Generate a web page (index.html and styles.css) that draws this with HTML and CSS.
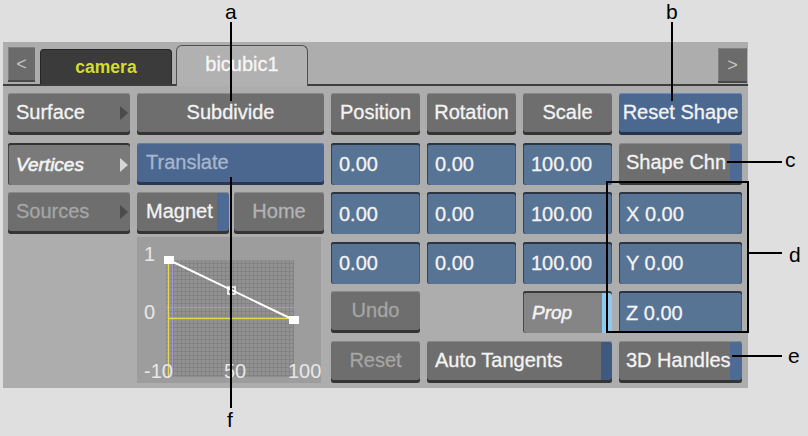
FILE: index.html
```html
<!DOCTYPE html>
<html>
<head>
<meta charset="utf-8">
<link rel="stylesheet" href="styles.css">
</head>
<body>
<div class="panel">
  <div class="tabbar">
    <div class="nav">&lt;</div>
    <div class="tab tab-camera">camera</div>
    <div class="tab tab-active">bicubic1</div>
    <div class="tab-fill"></div>
    <div class="nav nav-r">&gt;</div>
  </div>
  <div class="grid">
    <div class="c g menu">Surface<span class="tri"></span></div>
    <div class="c g center">Subdivide</div>
    <div class="c g center">Position</div>
    <div class="c g center">Rotation</div>
    <div class="c g center">Scale</div>
    <div class="c bb center">Reset Shape</div>

    <div class="c menu vert">Vertices<span class="tri tri-light"></span></div>
    <div class="c trans">Translate</div>
    <div class="c f">0.00</div>
    <div class="c f">0.00</div>
    <div class="c f">100.00</div>
    <div class="c g strip rpad">Shape Chn</div>

    <div class="c g menu dis">Sources<span class="tri"></span></div>
    <div class="pair">
      <div class="c g strip magnet">Magnet</div>
      <div class="c g center home">Home</div>
    </div>
    <div class="c f">0.00</div>
    <div class="c f">0.00</div>
    <div class="c f">100.00</div>
    <div class="c f rpad">X 0.00</div>

    <div class="graph">
      <svg width="184" height="146" viewBox="0 0 184 146">
        <defs>
          <pattern id="grid" x="29" y="23" width="4" height="4" patternUnits="userSpaceOnUse">
            <path d="M3.5 0V4M0 3.5H4" fill="none" stroke="#838383" stroke-width="1"/>
          </pattern>
        </defs>
        <rect x="29" y="23" width="128" height="117" fill="#929292"/>
        <rect x="29" y="23" width="128" height="117" fill="url(#grid)"/>
        <line x1="29" y1="70.5" x2="157" y2="70.5" stroke="#9d97c4" stroke-width="1"/>
        <line x1="35.5" y1="23" x2="35.5" y2="140" stroke="#9d97c4" stroke-width="1"/>
        <line x1="31.5" y1="24" x2="31.5" y2="140" stroke="#e8da4c" stroke-width="1.5"/>
        <line x1="31" y1="81.5" x2="157" y2="81.5" stroke="#e8da4c" stroke-width="1.5"/>
        <line x1="32" y1="23" x2="157" y2="83" stroke="#ffffff" stroke-width="2"/>
        <rect x="27" y="19" width="10" height="8" fill="#ffffff"/>
        <rect x="152" y="79" width="10" height="8" fill="#ffffff"/>
        <rect x="91" y="50" width="7" height="7" fill="none" stroke="#ffffff" stroke-width="1.5"/>
        <text class="gl" x="7" y="24">1</text>
        <text class="gl" x="7" y="82">0</text>
        <text class="gl" x="7" y="141">-10</text>
        <text class="gl" x="87" y="141">50</text>
        <text class="gl" x="151" y="141">100</text>
      </svg>
    </div>
    <div class="c f r4 c3">0.00</div>
    <div class="c f r4 c4">0.00</div>
    <div class="c f r4 c5">100.00</div>
    <div class="c f rpad r4 c6">Y 0.00</div>

    <div class="c g center dis r5 c3">Undo</div>
    <div class="c prop r5 c5">Prop</div>
    <div class="c f rpad r5 c6">Z 0.00</div>

    <div class="c g center dis r6 c3">Reset</div>
    <div class="c g strip-dark auto r6">Auto Tangents</div>
    <div class="c g strip rpad r6 c6">3D Handles</div>
  </div>
</div>

<div class="annot">
  <span class="lbl lbl-a">a</span>
  <span class="lbl lbl-b">b</span>
  <span class="lbl lbl-c">c</span>
  <span class="lbl lbl-d">d</span>
  <span class="lbl lbl-e">e</span>
  <span class="lbl lbl-f">f</span>
  <div class="ln ln-a"></div>
  <div class="ln ln-b"></div>
  <div class="ln ln-c"></div>
  <div class="ln ln-d"></div>
  <div class="ln ln-e"></div>
  <div class="ln ln-f"></div>
  <div class="box-d"></div>
</div>
</body>
</html>
```

FILE: styles.css
```css
html, body {
  margin: 0;
  padding: 0;
}
body {
  width: 808px;
  height: 436px;
  background: #dfdfdf;
  font-family: "Liberation Sans", Arial, sans-serif;
  position: relative;
  overflow: hidden;
}

.panel {
  margin: 42px 0 0 3px;
  width: 745px;
  height: 346px;
  background: #adadad;
  box-sizing: border-box;
}

/* ---------- tab bar ---------- */
.tabbar {
  display: flex;
  align-items: flex-start;
  height: 42px;
  border-bottom: 2px solid #3e3e3e;
  padding-left: 5px;
}
.nav {
  margin-top: 5px;
  width: 27px;
  height: 35px;
  margin-right: 5px;
  background: #6b6b6b;
  box-shadow: inset 0 -2px 0 #4a4a4a, inset 1px 1px 0 #808080;
  color: #c4c4c4;
  font-size: 18px;
  display: flex;
  align-items: center;
  justify-content: center;
  box-sizing: border-box;
}
.nav-r {
  margin-top: 6px;
  width: 29px;
  margin-right: 1px;
}
.tab {
  box-sizing: border-box;
  width: 132px;
  display: flex;
  align-items: center;
  justify-content: center;
}
.tab-camera {
  margin-top: 7px;
  height: 35px;
  margin-right: 4px;
  background: #3b3b3b;
  border: 1px solid #262626;
  border-bottom: none;
  border-radius: 4px 4px 0 0;
  color: #d6dc2a;
  font-weight: bold;
  font-size: 17.5px;
}
.tab-active {
  margin-top: 3px;
  height: 41px;
  background: #b1b1b1;
  border: 1px solid #505050;
  border-bottom: none;
  border-radius: 6px 6px 0 0;
  color: #f6f6f6;
  font-size: 20px;
  padding-bottom: 3px;
  -webkit-text-stroke: 0.3px #f6f6f6;
}
.tab-fill {
  flex: 1;
}

/* ---------- control grid ---------- */
.grid {
  display: grid;
  grid-template-columns: 122px 187px 89px 89px 89px 123px;
  grid-template-rows: repeat(6, 42px);
  column-gap: 7px;
  row-gap: 7.6px;
  padding: 7px 5px 0;
}
.c {
  display: flex;
  align-items: center;
  box-sizing: border-box;
  padding: 0 8px 3px;
  font-size: 20px;
  color: #f3f3f3;
  -webkit-text-stroke: 0.3px currentColor;
  border-radius: 3px;
  white-space: nowrap;
  min-width: 0;
}
.center {
  justify-content: center;
  padding-left: 0;
  padding-right: 0;
}
.rpad {
  padding-left: 7px;
}

.r4 { grid-row: 4; }
.r5 { grid-row: 5; }
.r6 { grid-row: 6; }
.c3 { grid-column: 3; }
.c4 { grid-column: 4; }
.c5 { grid-column: 5; }
.c6 { grid-column: 6; }

/* raised gray button */
.g {
  background: #6e6e6e;
  box-shadow: inset 0 -3px 0 #353535, inset 0 1px 0 #8a8a8a;
}
/* raised blue button */
.bb {
  background: #4b6891;
  box-shadow: inset 0 -3px 0 #26344c, inset 0 1px 0 #6d8ab2;
}
/* blue numeric field (inset) */
.f {
  background: #587494;
  box-shadow: inset 0 2px 0 #2b3543, inset 1px 0 0 #364253, inset -1px 0 0 #465b76;
  padding-bottom: 0;
  padding-top: 2px;
}
.trans {
  background: #4b6790;
  box-shadow: inset 0 -3px 0 #2a3852, inset 0 1px 0 #6580a8;
  color: #a7b6cc;
  padding-left: 9px;
}

/* menus in the left column */
.menu {
  padding-right: 2px;
}
.tri {
  margin-left: auto;
  width: 0;
  height: 0;
  border-left: 8px solid #4b4b4b;
  border-top: 7px solid transparent;
  border-bottom: 7px solid transparent;
}
.tri-light {
  border-left-color: #d6d6d6;
}
.vert {
  background: #7a7a7a;
  box-shadow: inset 0 2px 0 #333333, inset 1px 0 0 #444444;
  font-style: italic;
  font-size: 19px;
  -webkit-text-stroke: 0.6px currentColor;
  padding-bottom: 0;
  padding-top: 2px;
}
.dis {
  color: #a5a5a5;
}

.pair {
  display: flex;
  gap: 5px;
}
.magnet {
  width: 92px;
  flex: none;
  padding-left: 9px;
}
.home {
  flex: 1;
  color: #b3b3b3;
}

.strip {
  background: linear-gradient(to left, #4d6b95 12px, #6e6e6e 12px);
}
.strip-dark {
  background: linear-gradient(to left, #3f5a80 11px, #6e6e6e 11px);
}

.graph {
  grid-column: 2;
  grid-row: 4 / 7;
  width: 184px;
  height: 146px;
  margin-top: -5px;
  background: #9d9d9d;
}
.graph svg {
  display: block;
}
.gl {
  font-family: "Liberation Sans", Arial, sans-serif;
  font-size: 20px;
  fill: #e8e8e8;
}

.prop {
  background: linear-gradient(to left, #8ccaf2 10px, #858585 10px);
  box-shadow: inset 0 2px 0 #3a3a3a, inset 1px 0 0 #4a4a4a;
  font-style: italic;
  font-size: 19px;
  -webkit-text-stroke: 0.5px currentColor;
  padding-left: 9px;
  padding-bottom: 0;
  padding-top: 2px;
}
.auto {
  grid-column: 4 / 6;
}

/* ---------- annotations (overlay) ---------- */
.annot {
  position: absolute;
  left: 0;
  top: 0;
  width: 808px;
  height: 436px;
  pointer-events: none;
}
.lbl {
  position: absolute;
  font-family: "Liberation Sans", Arial, sans-serif;
  font-size: 21px;
  line-height: 1.15;
  color: #000;
}
.lbl-a { left: 225px; top: 0px; }
.lbl-b { left: 666px; top: 0px; }
.lbl-c { left: 785px; top: 148px; }
.lbl-d { left: 789px; top: 243px; }
.lbl-e { left: 788px; top: 344px; }
.lbl-f { left: 227px; top: 408px; }
.ln {
  position: absolute;
  background: #000;
}
.ln-a { left: 230px; top: 22px; width: 2px; height: 79px; }
.ln-b { left: 671px; top: 22px; width: 2px; height: 79px; }
.ln-c { left: 727px; top: 161px; width: 55px; height: 2px; }
.ln-d { left: 749px; top: 252px; width: 33px; height: 2px; }
.ln-e { left: 732px; top: 355px; width: 50px; height: 2px; }
.ln-f { left: 230px; top: 177px; width: 2px; height: 231px; }
.box-d {
  position: absolute;
  left: 606px;
  top: 181px;
  width: 143px;
  height: 152px;
  box-sizing: border-box;
  border: 2px solid #000;
}
```
